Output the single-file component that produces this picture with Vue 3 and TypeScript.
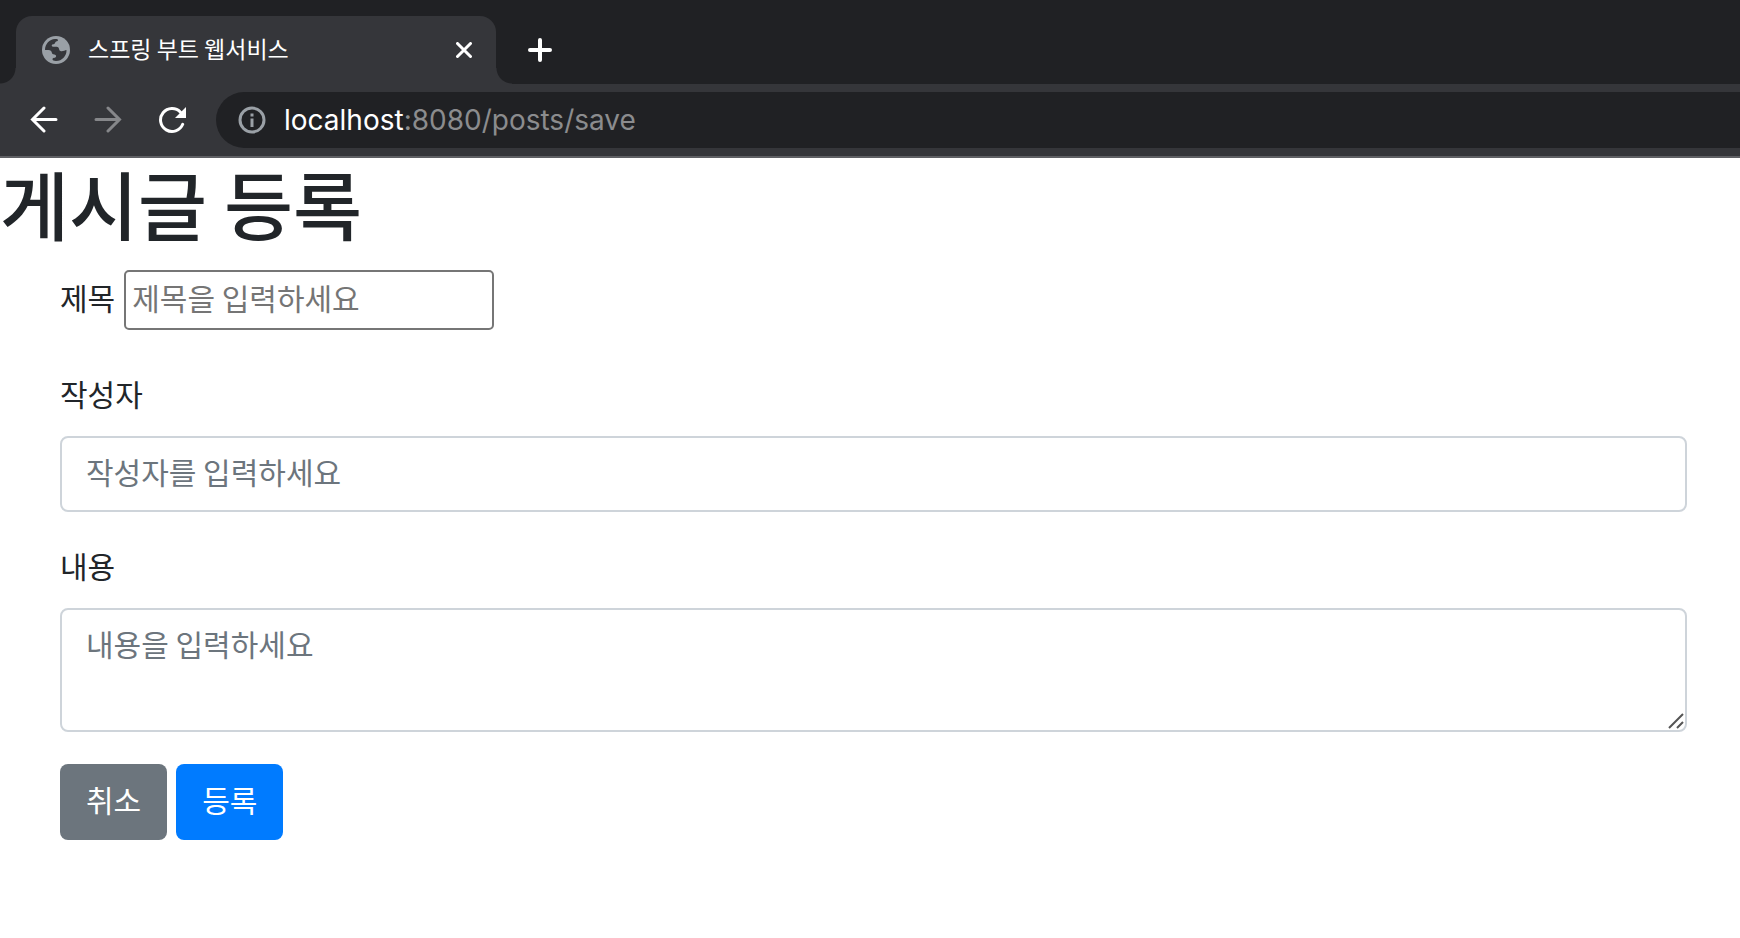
<script setup lang="ts">
import { ref } from 'vue'

const tabTitle = '스프링 부트 웹서비스'
const host = 'localhost'
const path = ':8080/posts/save'

const title = ref('')
const author = ref('')
const content = ref('')
</script>

<template>
  <div class="window">
    <header>
      <div class="tabstrip">
        <div class="tab">
          <svg class="globe" viewBox="0 0 28 28" aria-hidden="true">
            <circle cx="14" cy="14" r="14" fill="#9aa0a6" />
            <path
              d="M3 14C3 8 7.500 3.300 13 3c2.400 0 3 .4 3 1.200 0 1.300-2.400.8-2.800 2.300-.3 1.300-.9 1.700-2.300 1.800-1.500.2-1.700 2.200 0 2.400 2.200.3 4.900-.6 5.800 1.300.8 1.900.4 2.900 2.300 3.200 2.200.3 3.800-.9 5.500-1.200.3 6-4.500 11-10.500 11-2.200 0-3.500-.6-3.500-1.700 0-1.700 2.900-1 3.500-2.500.5-1.400-.6-2-1.700-2.200-1.500-.3-2.300-.7-2.500-2-.3-1.700-1.300-2.400-3.300-2.500Z"
              fill="#35363a"
            />
          </svg>
          <span class="tab-title">{{ tabTitle }}</span>
          <button type="button" class="icon-button close" aria-label="탭 닫기">
            <svg width="16" height="16" viewBox="0 0 16 16">
              <path d="M1.500 1.500 14.500 14.500M14.500 1.500 1.500 14.500" />
            </svg>
          </button>
        </div>
        <button type="button" class="icon-button add" aria-label="새 탭">
          <svg width="24" height="24" viewBox="0 0 24 24">
            <path d="M12 2v20M2 12h20" />
          </svg>
        </button>
      </div>
      <div class="toolbar">
        <button type="button" class="icon-button" aria-label="뒤로">
          <svg width="28" height="28" viewBox="0 0 28 28">
            <path d="M26 13.500H3M14 2 2.500 13.500 14 25" />
          </svg>
        </button>
        <button type="button" class="icon-button" aria-label="앞으로" disabled>
          <svg width="28" height="28" viewBox="0 0 28 28">
            <path d="M2 13.500h23M14 2l11.500 11.500L14 25" />
          </svg>
        </button>
        <button type="button" class="icon-button" aria-label="새로고침">
          <svg width="28" height="28" viewBox="0 0 28 28">
            <path d="M22.500 6.200A11.500 11.500 0 1 0 24.700 18.300" />
            <path d="M28 1v11H17Z" class="solid" />
          </svg>
        </button>
        <div class="omnibox">
          <svg width="28" height="28" viewBox="0 0 28 28" aria-hidden="true">
            <circle cx="14" cy="14" r="12" fill="none" stroke="#9aa0a6" stroke-width="3" />
            <path d="M12.500 7.500h3v3h-3ZM12.500 12.500h3V21h-3Z" fill="#9aa0a6" />
          </svg>
          <span class="url"><span class="host">{{ host }}</span>{{ path }}</span>
        </div>
      </div>
    </header>

    <main>
      <h1>게시글 등록</h1>
      <form @submit.prevent>
        <div class="group inline">
          <label for="title">제목</label>
          <input id="title" v-model="title" type="text" placeholder="제목을 입력하세요" />
        </div>
        <div class="group">
          <label for="author">작성자</label>
          <input id="author" v-model="author" class="control" type="text" placeholder="작성자를 입력하세요" />
        </div>
        <div class="group">
          <label for="content">내용</label>
          <div class="area">
            <textarea id="content" v-model="content" class="control" placeholder="내용을 입력하세요"></textarea>
            <svg class="grip" width="16" height="16" viewBox="0 0 16 16" aria-hidden="true">
              <path d="M1 15 15 1M9 15l6-6" />
            </svg>
          </div>
        </div>
        <div class="actions">
          <button type="button" class="btn secondary">취소</button>
          <button type="submit" class="btn primary">등록</button>
        </div>
      </form>
    </main>
  </div>
</template>

<style>
body {
  margin: 0;
  background: #fff;
}
</style>

<style scoped>
.window,
.window * {
  box-sizing: border-box;
}
.window {
  overflow: hidden;
  color: #212529;
  font-family: 'Noto Sans CJK KR', sans-serif;
  font-size: 30px;
  line-height: 48px;
}
button,
input,
textarea {
  font: inherit;
  margin: 0;
}
.tabstrip {
  display: flex;
  align-items: flex-end;
  height: 84px;
  background: #202124;
}
.tab {
  position: relative;
  display: flex;
  align-items: center;
  width: 480px;
  height: 68px;
  margin-left: 16px;
  padding: 0 20px 0 26px;
  border-radius: 16px 16px 0 0;
  background: #35363a;
}
.tab::before,
.tab::after {
  content: '';
  position: absolute;
  bottom: 0;
  width: 16px;
  height: 16px;
}
.tab::before {
  right: 100%;
  background: radial-gradient(circle at 0 0, #202124 15px, #35363a 16px);
}
.tab::after {
  left: 100%;
  background: radial-gradient(circle at 100% 0, #202124 15px, #35363a 16px);
}
.globe {
  width: 28px;
  height: 28px;
}
.tab-title {
  flex: 1;
  margin-left: 18px;
  padding-bottom: 4px;
  color: #fff;
  font-size: 23px;
  white-space: nowrap;
}
.icon-button {
  display: flex;
  padding: 0;
  border: 0;
  background: none;
  color: #fff;
}
.icon-button path {
  fill: none;
  stroke: currentColor;
  stroke-width: 3;
  stroke-linecap: round;
}
.icon-button path.solid {
  fill: currentColor;
  stroke: none;
}
.icon-button:disabled {
  color: #86878a;
}
.close {
  padding: 4px;
}
.add {
  align-self: center;
  margin: 16px 0 0 32px;
}
.add path {
  stroke-width: 4;
}
.toolbar {
  display: flex;
  align-items: center;
  gap: 36px;
  height: 74px;
  padding-left: 30px;
  border-bottom: 2px solid #5f6064;
  background: #35363a;
}
.omnibox {
  display: flex;
  flex: 1;
  align-items: center;
  gap: 18px;
  height: 56px;
  margin-left: -6px;
  padding-left: 22px;
  border-radius: 28px 0 0 28px;
  background: #202124;
}
.url {
  color: #8b8c8e;
  font-family: Inter, sans-serif;
  font-size: 28px;
}
.host {
  color: #fff;
}
h1 {
  margin: 0 0 22px;
  font-size: 75px;
  font-weight: 500;
  line-height: 90px;
}
form {
  padding: 0 53px 0 60px;
}
.group {
  margin-bottom: 32px;
}
.group label {
  display: block;
  margin-bottom: 22px;
  line-height: 42px;
}
.group.inline {
  display: flex;
  align-items: center;
  gap: 9px;
  margin-bottom: 42px;
}
.inline label {
  margin: 0;
  padding-bottom: 6px;
}
.inline input {
  width: 370px;
  height: 60px;
  padding: 0 6px 6px;
  border: 2px solid #767676;
  border-radius: 5px;
}
.inline input::placeholder {
  color: #757575;
}
.control {
  display: block;
  width: 100%;
  height: 76px;
  padding: 9px 24px 15px;
  border: 2px solid #ced4da;
  border-radius: 8px;
  background: #fff;
  color: #495057;
}
.control::placeholder {
  color: #6c757d;
  opacity: 1;
}
.area {
  position: relative;
}
textarea.control {
  height: 124px;
  resize: none;
}
.grip {
  position: absolute;
  right: 3px;
  bottom: 3px;
  fill: none;
  stroke: #555;
  stroke-width: 2;
}
.actions {
  display: flex;
  gap: 9px;
}
.btn {
  height: 76px;
  padding: 0 26px 6px;
  border: 0;
  border-radius: 8px;
  color: #fff;
}
.secondary {
  background: #6c757d;
}
.primary {
  background: #007bff;
}
</style>
